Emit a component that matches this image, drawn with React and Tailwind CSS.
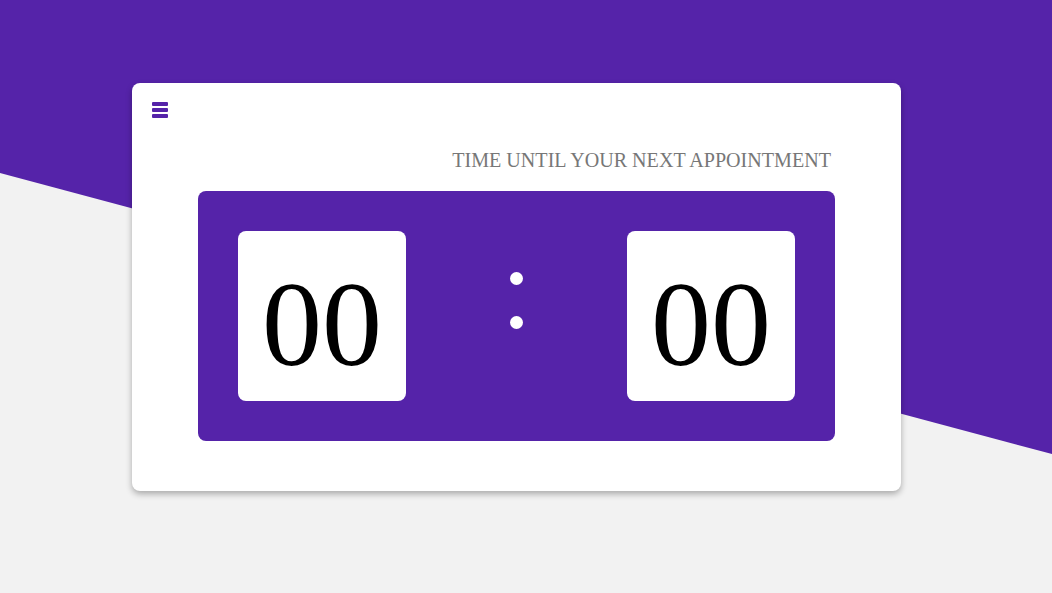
export default function App() {
  return (
    <div className="relative w-[1052px] h-[593px] bg-[#f2f2f2] overflow-hidden" style={{ fontFamily: '"Liberation Serif", serif' }}>
      <div className="absolute inset-0 bg-[#5523a9] [clip-path:polygon(0_0,100%_0,100%_454px,0_173px)]" />
      <div className="relative ml-[132px] pt-[83px]">
        <div className="w-[769px] h-[408px] bg-white rounded-[8px] shadow-[0_3px_6px_rgba(0,0,0,0.3)] flex flex-col pt-[19px]">
          <div className="pl-[20px] flex flex-col gap-[2.5px] w-fit">
            <div className="w-[16px] h-[3.5px] bg-[#5523a9] rounded-[1px]" />
            <div className="w-[16px] h-[3.5px] bg-[#5523a9] rounded-[1px]" />
            <div className="w-[16px] h-[3.5px] bg-[#5523a9] rounded-[1px]" />
          </div>
          <div className="mt-[30px] pr-[70px] text-right text-[20.1px] leading-[24px] text-[#777777]">
            TIME UNTIL YOUR NEXT APPOINTMENT
          </div>
          <div className="mx-[66px] mt-[19px] h-[250px] bg-[#5523a9] rounded-[8px] p-[40px] flex items-center justify-between">
            <div className="w-[168px] h-[170px] bg-white rounded-[8px] flex items-center justify-center">
              <span className="text-[120px] leading-none text-black mt-[18px]">00</span>
            </div>
            <div className="flex flex-col gap-[31px] items-center mb-[30px]">
              <div className="w-[13px] h-[13px] rounded-full bg-white" />
              <div className="w-[13px] h-[13px] rounded-full bg-white" />
            </div>
            <div className="w-[168px] h-[170px] bg-white rounded-[8px] flex items-center justify-center">
              <span className="text-[120px] leading-none text-black mt-[18px]">00</span>
            </div>
          </div>
        </div>
      </div>
    </div>
  );
}
